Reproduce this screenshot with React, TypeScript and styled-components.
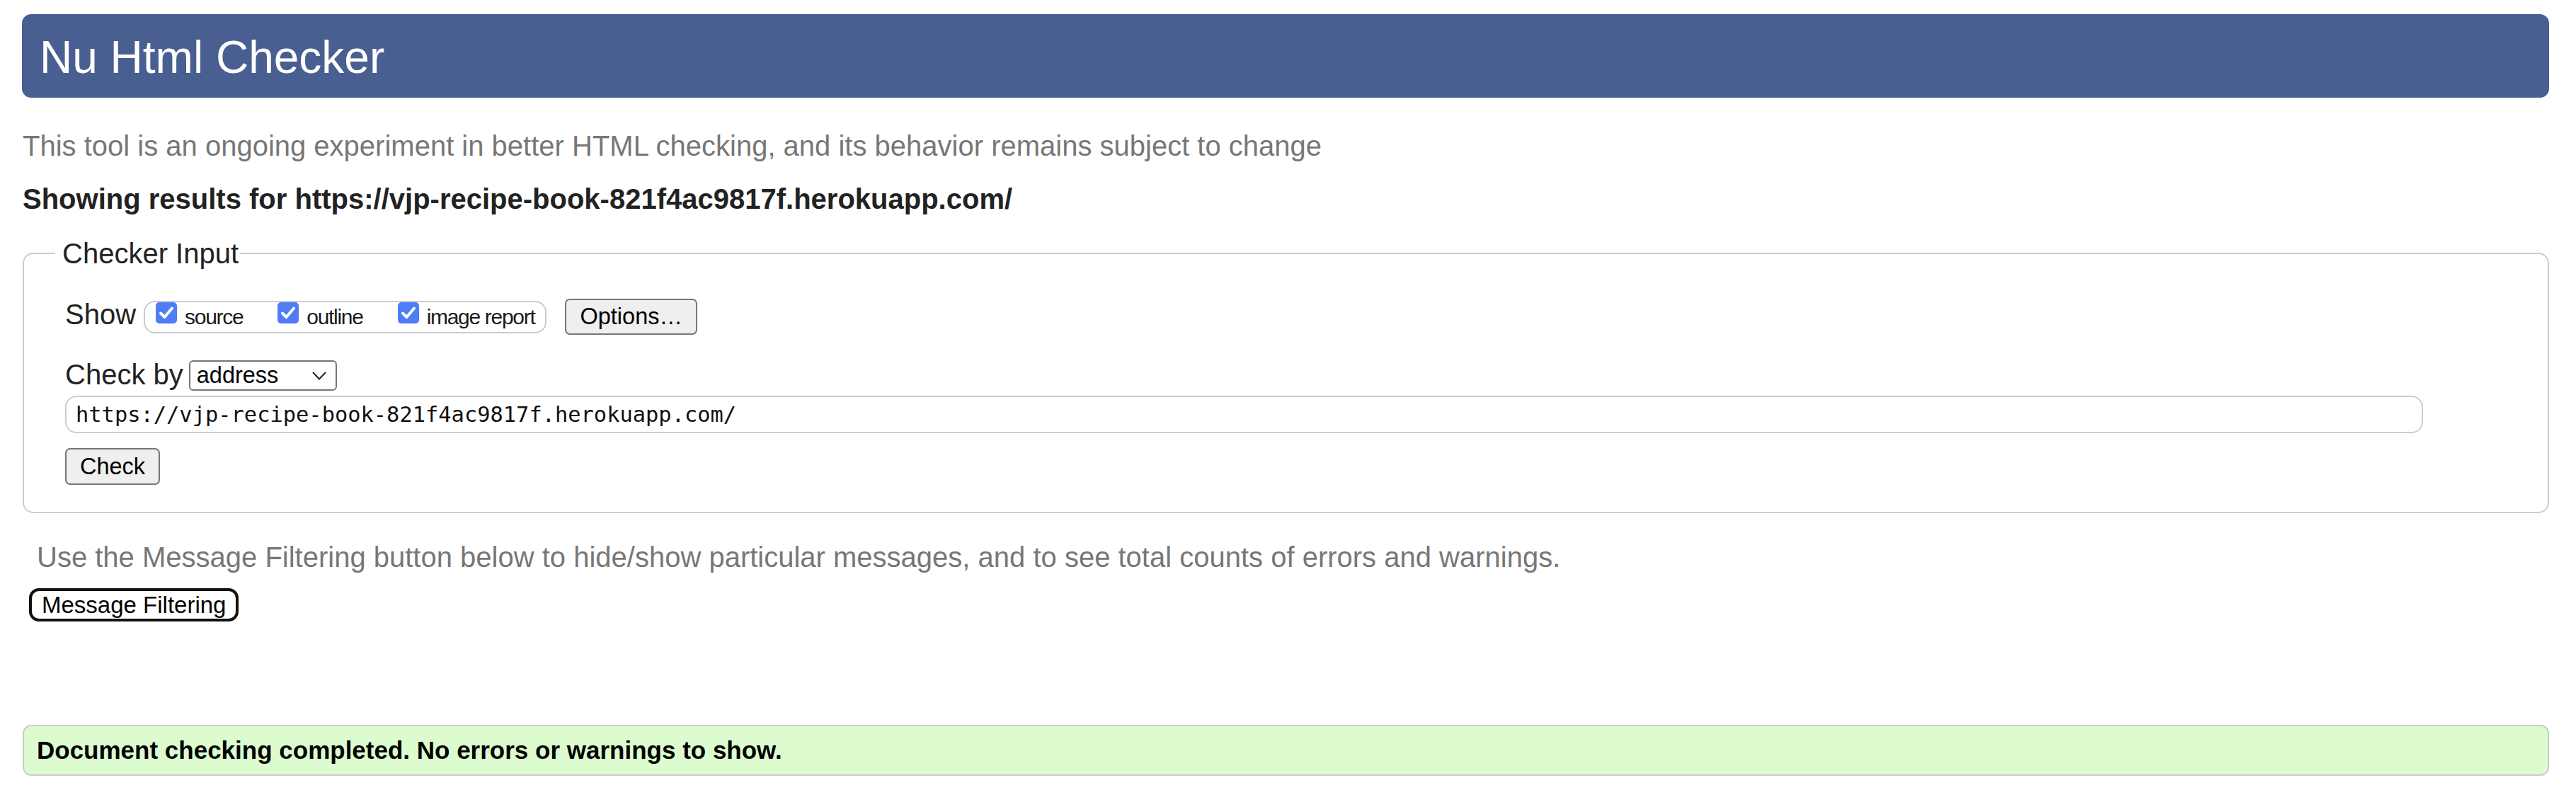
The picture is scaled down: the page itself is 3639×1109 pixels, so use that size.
import React from "react";
import styled, { createGlobalStyle } from "styled-components";

const GlobalStyle = createGlobalStyle`
  html, body { margin: 0; padding: 0; background: #ffffff; }
  body { font-family: "Liberation Sans", Arial, Helvetica, sans-serif; color: #222222; }
  * { box-sizing: border-box; }
`;

const Page = styled.div`
  padding: 20px 38px 13px 32px;
`;

const Header = styled.header`
  height: 118px;
  margin-left: -1px;
  background: #495f92;
  border-radius: 13px;
  padding: 29px 0 0 25px;
`;

const Title = styled.h1`
  margin: 0;
  font-size: 64px;
  line-height: 64px;
  font-weight: 400;
  color: #ffffff;
`;

const Paragraph = styled.p<{ $top: number; $indent?: number; $muted?: boolean; $bold?: boolean }>`
  margin: ${(p) => p.$top}px 0 0 0;
  padding-left: ${(p) => p.$indent ?? 0}px;
  font-size: 40px;
  line-height: 46px;
  font-weight: ${(p) => (p.$bold ? 700 : 400)};
  color: ${(p) => (p.$muted ? "#777777" : "#222222")};
  white-space: nowrap;
`;

const Fieldset = styled.fieldset`
  margin: 31px 0 0 0;
  border: 2px solid #cccccc;
  border-radius: 15px;
  padding: 41px 44px 38px 44px;
  min-inline-size: 0;
`;

const Legend = styled.legend`
  padding: 0 2px 0 10px;
  font-size: 40px;
  line-height: 46px;
  color: #222222;
`;

const Content = styled.div`
  padding-left: 14px;
  display: flex;
  flex-direction: column;
  align-items: flex-start;
`;

const Row = styled.div<{ $height: number; $top?: number }>`
  display: flex;
  align-items: center;
  height: ${(p) => p.$height}px;
  margin-top: ${(p) => p.$top ?? 0}px;
`;

const RowLabel = styled.span<{ $drop: number; $gap: number }>`
  font-size: 40px;
  line-height: 40px;
  padding-bottom: ${(p) => p.$drop}px;
  margin-right: ${(p) => p.$gap}px;
  color: #222222;
  white-space: nowrap;
`;

const ChoiceGroup = styled.div`
  display: flex;
  align-items: flex-start;
  gap: 49px;
  height: 46px;
  border: 2px solid #cccccc;
  border-radius: 16px;
  padding: 0 15px 0 15px;
`;

const Choice = styled.label`
  display: flex;
  align-items: flex-start;
  cursor: pointer;
`;

const CheckBox = styled.span`
  width: 30px;
  height: 30px;
  border-radius: 5px;
  background: #4f7df7;
  display: flex;
  align-items: center;
  justify-content: center;
  flex: none;
`;

const ChoiceText = styled.span`
  margin-left: 11px;
  font-size: 30px;
  letter-spacing: -1.3px;
  line-height: 42px;
  color: #1a1a1a;
  white-space: nowrap;
`;

const FormButton = styled.button<{ $left?: number; $height: number }>`
  margin-left: ${(p) => p.$left ?? 0}px;
  height: ${(p) => p.$height}px;
  padding: 0 19px;
  border: 2px solid #767676;
  border-radius: 7px;
  background: #efefef;
  font-family: "Liberation Sans", Arial, sans-serif;
  font-size: 32.5px;
  color: #000000;
  white-space: nowrap;
`;

const SelectBox = styled.div`
  width: 209px;
  height: 43px;
  border: 2px solid #767676;
  border-radius: 6px;
  background: #ffffff;
  display: flex;
  align-items: center;
  justify-content: space-between;
  padding: 0 13px 0 9px;
  font-size: 32.5px;
  color: #000000;
`;

const UrlInput = styled.input`
  margin-top: 7px;
  width: calc(100% - 132px);
  height: 53px;
  border: 2px solid #cccccc;
  border-radius: 16px;
  padding: 0 13px;
  font-family: "DejaVu Sans Mono", "Liberation Mono", monospace;
  font-size: 30.4px;
  color: #111111;
  background: #ffffff;
  outline: none;
`;

const FilterButton = styled.button`
  margin: 21px 0 0 9px;
  height: 47px;
  padding: 0 14px;
  border: 4px solid #111111;
  border-radius: 14px;
  background: #ffffff;
  font-family: "Liberation Sans", Arial, sans-serif;
  font-size: 33px;
  color: #000000;
  white-space: nowrap;
`;

const SuccessBox = styled.div`
  margin-top: 146px;
  height: 72px;
  border: 2px solid #cccccc;
  border-radius: 12px;
  background: #dcfbcf;
  display: flex;
  align-items: center;
  padding: 0 18px;
  font-size: 35px;
  font-weight: 700;
  color: #000000;
  white-space: nowrap;
`;

const CheckMark = () => (
  <svg width="30" height="30" viewBox="0 0 30 30" aria-hidden="true">
    <path d="M7 15.5 L12.5 21 L23 8.5" fill="none" stroke="#ffffff" strokeWidth="4" strokeLinecap="round" strokeLinejoin="round" />
  </svg>
);

const Chevron = () => (
  <svg width="20" height="12" viewBox="0 0 20 12" aria-hidden="true">
    <path d="M1 1 L10 10.5 L19 1" fill="none" stroke="#222222" strokeWidth="2" />
  </svg>
);

const choices = ["source", "outline", "image report"];

export default function App() {
  return (
    <>
      <GlobalStyle />
      <Page>
        <Header>
          <Title>Nu Html Checker</Title>
        </Header>
        <Paragraph $top={45} $muted>
          This tool is an ongoing experiment in better HTML checking, and its behavior remains subject to change
        </Paragraph>
        <Paragraph $top={29} $bold>
          Showing results for https://vjp-recipe-book-821f4ac9817f.herokuapp.com/
        </Paragraph>
        <Fieldset>
          <Legend>Checker Input</Legend>
          <Content>
            <Row $height={51}>
              <RowLabel $drop={8} $gap={11}>Show</RowLabel>
              <ChoiceGroup>
                {choices.map((c) => (
                  <Choice key={c}>
                    <CheckBox>
                      <CheckMark />
                    </CheckBox>
                    <ChoiceText>{c}</ChoiceText>
                  </Choice>
                ))}
              </ChoiceGroup>
              <FormButton $left={26} $height={51}>Options…</FormButton>
            </Row>
            <Row $height={43} $top={36}>
              <RowLabel $drop={4} $gap={8}>Check by</RowLabel>
              <SelectBox>
                <span>address</span>
                <Chevron />
              </SelectBox>
            </Row>
            <UrlInput readOnly value="https://vjp-recipe-book-821f4ac9817f.herokuapp.com/" />
            <Row $height={52} $top={21}>
              <FormButton $height={52}>Check</FormButton>
            </Row>
          </Content>
        </Fieldset>
        <Paragraph $top={39} $indent={20} $muted>
          Use the Message Filtering button below to hide/show particular messages, and to see total counts of errors and warnings.
        </Paragraph>
        <FilterButton>Message Filtering</FilterButton>
        <SuccessBox>Document checking completed. No errors or warnings to show.</SuccessBox>
      </Page>
    </>
  );
}
